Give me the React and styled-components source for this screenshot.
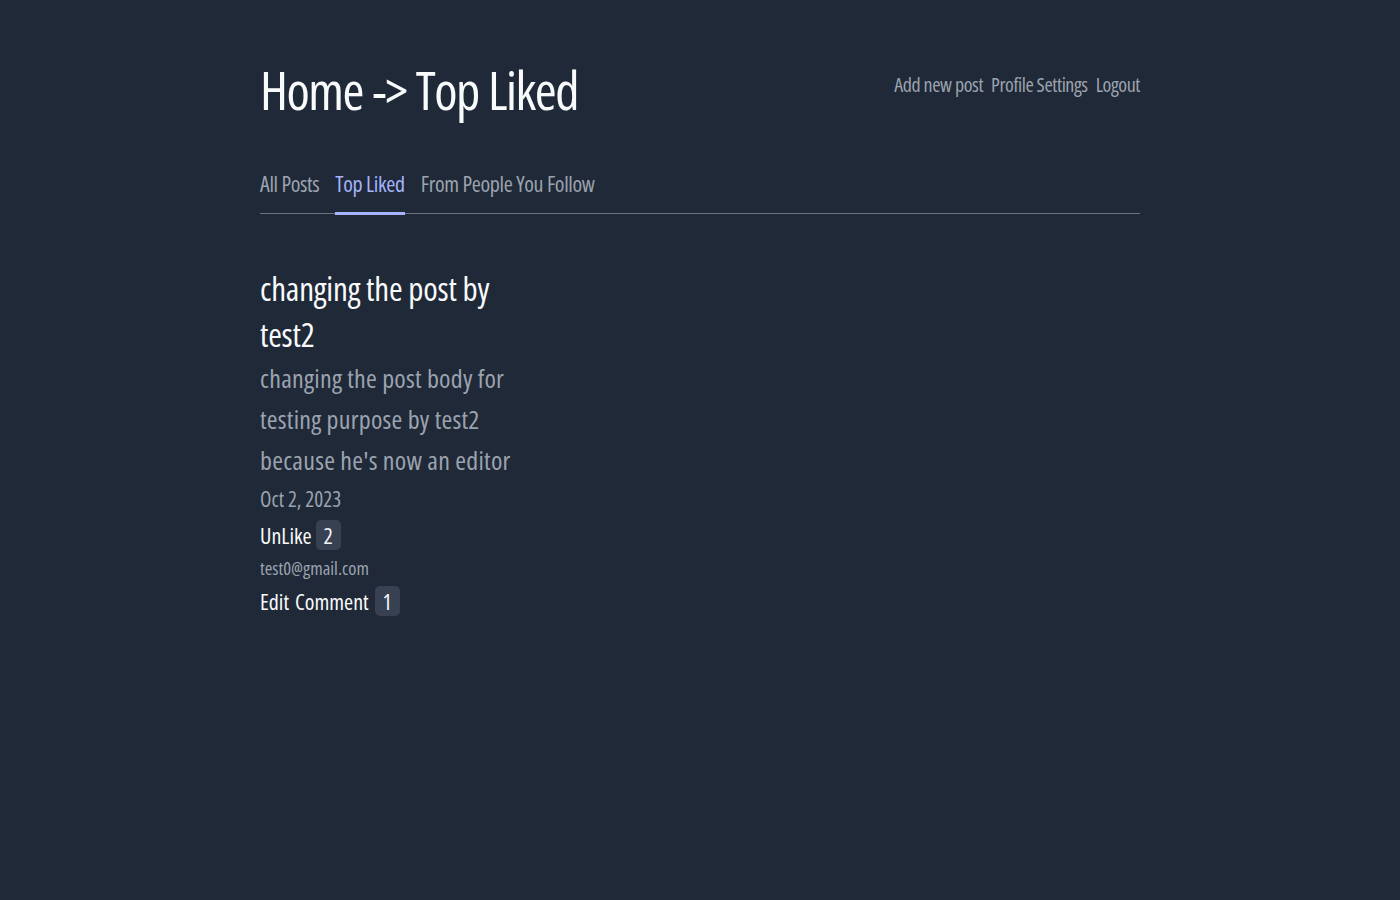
import React from "react";
import styled, { createGlobalStyle } from "styled-components";

const Global = createGlobalStyle`
  html, body {
    margin: 0;
    padding: 0;
    background: #1f2937;
    min-height: 100%;
  }
  body {
    font-family: "Open Sans", "DejaVu Sans", sans-serif;
    font-stretch: 75%;
    color: #f3f4f6;
  }
`;

const Page = styled.div`
  min-height: 900px;
  background: #1f2937;
`;

const Container = styled.div`
  width: 880px;
  margin: 0 auto;
  padding-top: 52px;
`;

const Header = styled.header`
  display: flex;
  justify-content: space-between;
  align-items: flex-start;
`;

const Title = styled.h1`
  margin: 0;
  font-size: 53px;
  line-height: 76px;
  font-weight: 400;
  color: #f9fafb;
  letter-spacing: -1.5px;
  word-spacing: 1px;
`;

const Nav = styled.nav`
  display: flex;
  gap: 8px;
  padding-top: 18px;
`;

const NavLink = styled.a`
  font-size: 20px;
  line-height: 30px;
  letter-spacing: -0.4px;
  color: #9ca3af;
  text-decoration: none;
`;

const Tabs = styled.div`
  display: flex;
  gap: 16px;
  margin-top: 40px;
  border-bottom: 1px solid #6b7280;
`;

const Tab = styled.a`
  font-size: 22px;
  line-height: 30px;
  letter-spacing: -0.35px;
  padding-bottom: 14px;
  color: ${(p) => (p.$active ? "#a5b4fc" : "#9ca3af")};
  border-bottom: 3px solid ${(p) => (p.$active ? "#a5b4fc" : "transparent")};
  margin-bottom: -2px;
  text-decoration: none;
`;

const Post = styled.article`
  width: 260px;
  margin-top: 52px;
  display: flex;
  flex-direction: column;
  align-items: flex-start;
`;

const PostTitle = styled.h2`
  margin: 0;
  font-size: 33px;
  line-height: 46px;
  letter-spacing: -0.2px;
  font-weight: 400;
  color: #f9fafb;
`;

const PostBody = styled.p`
  margin: 0;
  font-size: 26px;
  line-height: 41px;
  letter-spacing: 0.25px;
  color: #9ca3af;
`;

const PostDate = styled.div`
  font-size: 21px;
  line-height: 37px;
  color: #9ca3af;
`;

const ActionRow = styled.div`
  display: flex;
  align-items: center;
  gap: ${(p) => p.$gap || 4}px;
  font-size: 22px;
  line-height: 34px;
  color: #f9fafb;
`;

const Action = styled.span`
  color: #f9fafb;
`;

const Badge = styled.span`
  display: inline-flex;
  align-items: center;
  justify-content: center;
  min-width: 25px;
  height: 30px;
  padding: 0 3px;
  box-sizing: border-box;
  border-radius: 5px;
  background: #374151;
  color: #f3f4f6;
  font-size: 22px;
`;

const Email = styled.div`
  font-size: 18.5px;
  line-height: 32px;
  color: #9ca3af;
`;

export default function App() {
  return (
    <Page>
      <Global />
      <Container>
        <Header>
          <Title>Home -&gt; Top Liked</Title>
          <Nav>
            <NavLink href="#">Add new post</NavLink>
            <NavLink href="#">Profile Settings</NavLink>
            <NavLink href="#">Logout</NavLink>
          </Nav>
        </Header>
        <Tabs>
          <Tab href="#">All Posts</Tab>
          <Tab href="#" $active>Top Liked</Tab>
          <Tab href="#">From People You Follow</Tab>
        </Tabs>
        <Post>
          <PostTitle>changing the post by test2</PostTitle>
          <PostBody>changing the post body for testing purpose by test2 because he's now an editor</PostBody>
          <PostDate>Oct 2, 2023</PostDate>
          <ActionRow>
            <Action>UnLike</Action>
            <Badge>2</Badge>
          </ActionRow>
          <Email>test0@gmail.com</Email>
          <ActionRow $gap={6}>
            <Action>Edit</Action>
            <Action>Comment</Action>
            <Badge>1</Badge>
          </ActionRow>
        </Post>
      </Container>
    </Page>
  );
}
